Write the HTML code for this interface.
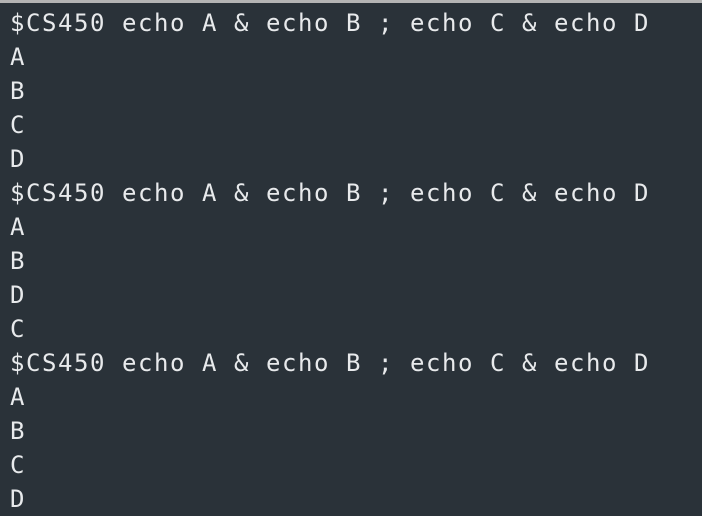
<!DOCTYPE html>
<html><head><meta charset="utf-8"><style>
html,body{margin:0;padding:0;}
body{width:702px;height:514px;overflow:hidden;background:#2a3239;border-top:3px solid #b4b4b4;box-sizing:border-box;}
pre{margin:0;padding:3px 0 0 10px;font-family:"DejaVu Sans Mono","Liberation Mono",monospace;font-size:24px;letter-spacing:1.55px;line-height:34px;color:#e8eaec;}
</style></head><body><pre>$CS450 echo A &amp; echo B ; echo C &amp; echo D
A
B
C
D
$CS450 echo A &amp; echo B ; echo C &amp; echo D
A
B
D
C
$CS450 echo A &amp; echo B ; echo C &amp; echo D
A
B
C
D</pre></body></html>
